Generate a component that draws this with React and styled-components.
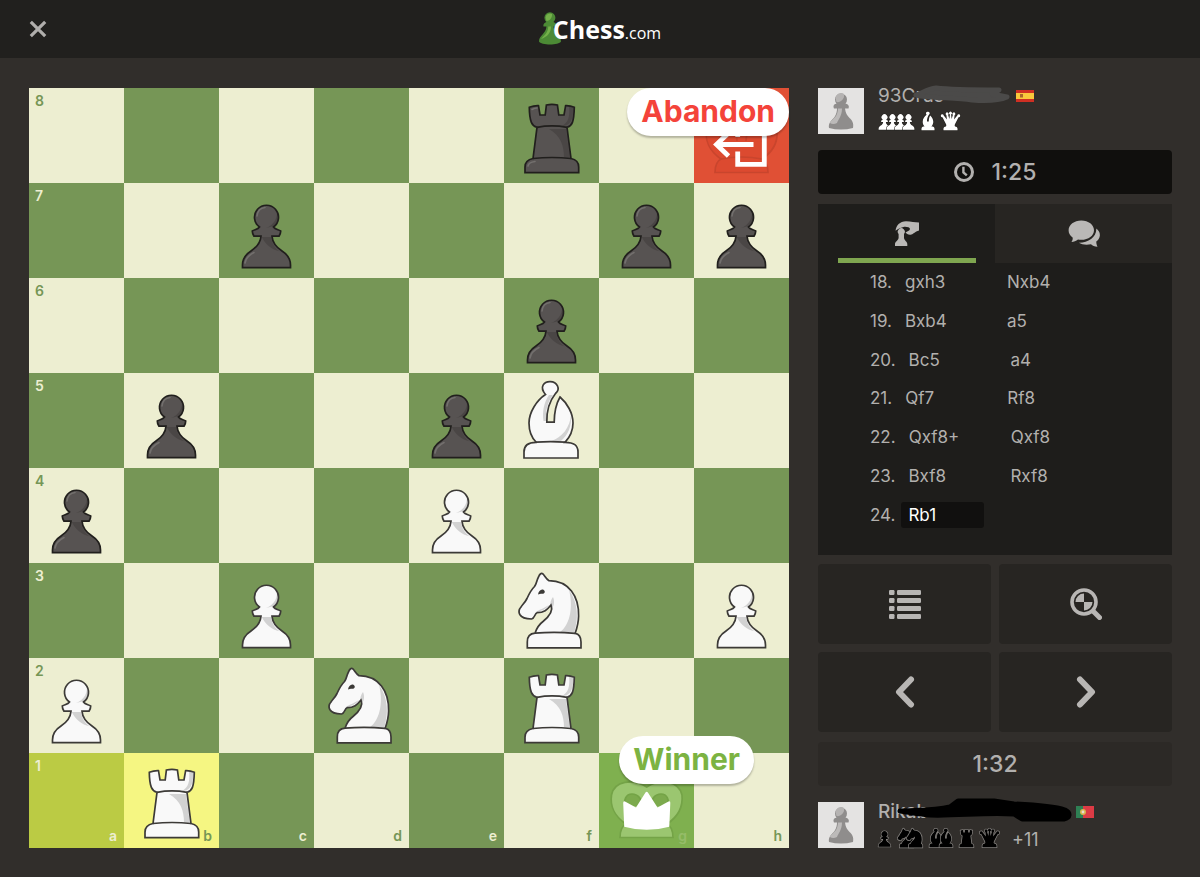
import React, { Component } from 'react';
import styled, { createGlobalStyle } from 'styled-components';

const GlobalStyle = createGlobalStyle`
  * {
    box-sizing : border-box;
  }

  body {
    margin : 0;
    background-color : #312e2b;
    font-family : Inter, "Liberation Sans", sans-serif;
    color : #b2b0ae;
  }

  button {
    font-family : inherit;
    border : 0;
    padding : 0;
    cursor : pointer;
  }

  svg {
    display : block;
  }
`;

const Header = styled.header`
  display : grid;
  grid-template-columns : 1fr auto 1fr;
  align-items : center;
  height : 58px;
  padding : 0 29px;
  background-color : #21201e;
`;

const CloseButton = styled.button`
  justify-self : start;
  background : none;
`;

const Logo = styled.a`
  display : flex;
  align-items : center;
  text-decoration : none;
  color : #ffffff;
  font-family : "Open Sans", "Noto Sans", sans-serif;
`;

const LogoName = styled.span`
  margin-left : -8px;
  padding-top : 4px;
  font-size : 25px;
  line-height : 32px;
  font-weight : bold;
`;

const LogoDomain = styled.span`
  font-size : 16px;
  font-weight : normal;
`;

const Game = styled.main`
  display : grid;
  grid-template-columns : minmax(0, 1fr) 354px;
  gap : 29px;
  padding : 30px 28px 29px 29px;
`;

const Board = styled.div`
  display : grid;
  grid-template-columns : repeat(8, 1fr);
  align-self : start;
`;

const Square = styled.div`
  position : relative;
  aspect-ratio : 1;
  color : ${props => props.$dark ? '#edeed1' : '#769656'};
  background-color : ${props => props.$color || (props.$dark ? '#769656' : '#edeed1')};
`;

const Rank = styled.span`
  position : absolute;
  top : 5px;
  left : 6px;
  font-size : 14px;
  line-height : 16px;
  font-weight : 600;
`;

const File = styled.span`
  position : absolute;
  right : 7px;
  bottom : 4px;
  font-size : 14px;
  line-height : 16px;
  font-weight : 600;
  opacity : ${props => props.$faded ? 0.2 : 1};
`;

const Badge = styled.strong`
  position : absolute;
  z-index : 1;
  top : ${props => props.$top};
  right : ${props => props.$right};
  height : 48px;
  padding : 0 14px;
  border-radius : 24px;
  background-color : #ffffff;
  box-shadow : 0 2px 2px rgba(0, 0, 0, 0.25);
  color : ${props => props.$color};
  font-size : 30px;
  line-height : 47px;
  font-weight : 700;
`;

const Sidebar = styled.aside`
  display : flex;
  flex-direction : column;
`;

const Player = styled.section`
  display : flex;
  gap : 14px;
  height : 46px;
`;

const PlayerInfo = styled.div`
  display : flex;
  flex-direction : column;
  justify-content : space-between;
  padding : ${props => props.$bottom ? '2px 0 0' : '0 0 3px'};
`;

const NameLine = styled.div`
  display : flex;
  align-items : center;
  height : 16px;
`;

const Name = styled.span`
  position : relative;
  width : ${props => props.$width};
  font-size : 19px;
  line-height : 16px;
  font-weight : ${props => props.$bold ? 500 : 400};
`;

const Scribble = styled.svg`
  position : absolute;
  left : ${props => props.$left};
  top : ${props => props.$top};
`;

const Captured = styled.div`
  display : flex;
  align-items : flex-end;
  gap : 6px;
  height : 20px;
`;

const Stack = styled.span`
  display : flex;

  svg + svg {
    margin-left : ${props => props.$overlap};
  }
`;

const Score = styled.span`
  margin-left : 7px;
  font-size : 18px;
  line-height : 16px;
`;

const Clock = styled.div`
  display : flex;
  align-items : center;
  justify-content : center;
  gap : 18px;
  height : 44px;
  margin : ${props => props.$active ? '16px 0 10px' : '10px 0 16px'};
  border-radius : 4px;
  background-color : ${props => props.$active ? '#100f0d' : '#2c2926'};
  font-size : 23px;
  font-weight : 500;
`;

const Panel = styled.section`
  display : flex;
  flex-direction : column;
  flex : 1;
  background-color : #1e1d1b;
`;

const Tabs = styled.div`
  display : flex;
`;

const Tab = styled.button`
  display : flex;
  align-items : center;
  justify-content : center;
  position : relative;
  flex : 1;
  height : 59px;
  color : #bab8b6;
  background-color : ${props => props.$active ? '#1e1d1b' : '#272522'};

  &::after {
    content : '';
    position : absolute;
    left : 20px;
    right : 19px;
    bottom : 0;
    height : ${props => props.$active ? '5px' : 0};
    background-color : #7fa650;
  }
`;

const Moves = styled.ol`
  display : grid;
  grid-auto-rows : 1fr;
  flex : 1;
  margin : 0;
  padding : 0 0 21px 52px;
  list-style : none;
`;

const MoveRow = styled.li`
  display : flex;
  align-items : center;
  font-size : 17px;
`;

const MoveNumber = styled.span`
  margin-right : 6px;
`;

const Move = styled.button`
  width : 83px;
  height : 26px;
  margin-right : 19px;
  padding-left : 7px;
  border-radius : 3px;
  text-align : left;
  font-size : 17px;
  color : ${props => props.$current ? '#ffffff' : '#b2b0ae'};
  background-color : ${props => props.$current ? '#11100f' : 'transparent'};
`;

const Controls = styled.div`
  display : grid;
  grid-template-columns : 1fr 1fr;
  gap : 8px;
  margin-top : 9px;
`;

const Control = styled.button`
  display : flex;
  align-items : center;
  justify-content : center;
  height : 80px;
  border-radius : 4px;
  color : #b8b6b4;
  background-color : #272522;
`;

const SHAPES = {
  pawn : {
    box : '21 20 53 67',
    body : 'M23.5 84.6V82C23.5 75 26.5 71.5 32 68C38 64 41.5 60 42 53.2H35C34 51.5 33.2 50 33.3 48C36 46.5 39 46.5 40.5 44A12 12 0 1 1 54.5 44C56 46.5 59 46.5 61.7 48C61.8 50 61 51.5 60 53.2H53C53.5 60 57 64 63 68C68.5 71.5 71.5 75 71.5 82V84.6Z',
    shade : ['M42.8 54H52.3C52.5 60 56 65 60.5 68.2C53 67 46 61 42.8 54Z', 'M55 43C60 38 60.5 31 57 26.5C60 34 55 42 47 45Z'],
    light : ['M38 33C38.5 28 42 25 46 24.5', 'M26 80C27 74 31 71.5 35 69.5'],
  },
  rook : {
    box : '19 14 58 73',
    body : 'M33 39.3C28 38 25.5 34 25.3 19.3Q30 17.5 34.5 17.7L36 27H41.2L42.4 17Q48 15.8 53.4 17L54.8 27H60L61.6 17.7Q66 17.5 70.3 19.3C70 34 68 38 63 39.3L67 70.5C72 71.5 74.7 74 74.7 79V84.6H21V79C21 74 24 71.5 29 70.5Z',
    shade : ['M45 41H62L65.8 69.5H60C60 58 57 48 45 41Z', 'M69.5 20C69 33 66 38 57 38.5C65 35 66 27 65 18.5Z'],
    light : ['M28 21.5Q31 20 33 20', 'M24 78C24.5 75 27 74 31 73.5'],
    lines : ['M33 39.3Q48 36.6 63 39.3', 'M29 70.5Q48 68.5 67 70.5'],
  },
  bishop : {
    box : '18 7 58 80',
    body : 'M32 69C27 64 25 57 25 50C25 39 33 27 41.5 21.5C35 14 40 8.5 46.3 8.7C53 8.8 57 16 51.5 20.5C45.5 28 42.5 38 42.8 49.2H50.2C50.3 39 52 31 56 24C63 30 69 40 69 50C69 57 66 64 61 69.4C70 69.4 74 72 74 79V85H20V79C20 72 24 69.4 32 69.4Z',
    shade : ['M67 42C68 53 64 62 57 68H47C58 65 66 54 67 42Z', 'M45 22C40 29 38 39 39.5 48H42V46C41.5 38 43.5 29 49 22Z'],
    light : [],
    lines : ['M32 69.2Q46.5 68 61 69.2'],
  },
  knight : {
    box : '13 8 66 79',
    body : 'M31 70.2C33 64 35 61.5 39 58.5C44.5 54 49.5 48 47 42C43 47 40 49.5 33 49.7C30.5 50.5 31 55.5 27.5 56C23 56 17.5 54.5 15.8 51.5C14.5 49 14.8 46.5 17 44C19 41 21 39.5 23 35.5C25 31 27 27 30.5 23.5C33 20 32.5 17.5 34.5 14C35.5 11.5 37 9.5 39 11C41 13 42 16 45 17.7C65 18 75 33 74.6 53C74.5 60 73 65 71.2 70.3C75 71 77 73.5 77 79V84.8H23.3V79C23.3 73.5 26 70.5 31 70.2Z',
    shade : ['M65 27C75 41 74 57 70.3 69.2H56C67 61 69 42 65 27Z', 'M49 34C46 38 46 41 47 47C50 43 51 39 49 34Z', 'M32 49C38 48 42 46 45 42C39 46 36 46 32 49Z'],
    light : [],
    lines : ['M31 70.2Q50 68.4 71.2 70.3'],
  },
  queen : {
    box : '9 8 77 79',
    body : 'M29 60L15 32A6 6 0 1 1 20 25L33 41L31 24A6 6 0 1 1 38 23L43 39L45 21A6 6 0 1 1 50 21L52 39L57 23A6 6 0 1 1 64 24L62 41L75 25A6 6 0 1 1 80 32L66 60C64 64 64 67 66 70C73 71 76 74 76 80V85H19V80C19 74 22 71 29 70C31 67 31 64 29 60Z',
    shade : [],
    light : [],
  },
};

const Piece = ({ name, dark }) => {
  const shape = SHAPES[name];
  const line = dark ? '#211f1d' : '#3c3a37';
  return (
    <svg viewBox="0 0 95 95" width="100%" height="100%" role="img" aria-label={name}>
      <path d={shape.body} fill={dark ? '#575352' : '#f9f9f9'} />
      {shape.shade.map(d => <path key={d} d={d} fill={dark ? '#4a4645' : '#d2d2d2'} />)}
      <path d={shape.body} fill="none" stroke={line} strokeWidth="1.7" />
      {shape.lines && shape.lines.map(d => <path key={d} d={d} fill="none" stroke={line} strokeWidth="1.7" />)}
      {dark && shape.light.map(d => <path key={d} d={d} fill="none" stroke="#73706e" strokeWidth="1.6" strokeLinecap="round" />)}
      {name === 'knight' && <path d="M34 31.5C34.5 28 37 25.5 39.5 26.7C42 28.5 40.5 31 38 30.8C36.5 30.8 35 31.2 34 31.5Z" fill={line} />}
    </svg>
  );
};

const MiniPiece = ({ name, dark, width, height = 18 }) => (
  <svg viewBox={SHAPES[name].box} width={width} height={height} overflow="visible" aria-hidden="true">
    <path
      d={SHAPES[name].body}
      fill={dark ? '#000000' : '#ffffff'}
      stroke={dark ? '#85827f' : '#262421'}
      strokeWidth={dark ? 6 : 5}
      paintOrder="stroke"
    />
  </svg>
);

const KingGhost = ({ fill, hole, line }) => (
  <g fill={fill} stroke={line} strokeWidth="1.7">
    <path d="M27 71C15 63 11 52 12.5 42C15 28 34 25 47.7 34C61 25 80 28 83 42C84 52 80 63 68 71C72 73 74 77 74 84.5H21C21 77 23 73 27 71Z" />
    <path d="M27 54C24 47 27 41 33 41C39 41 43 46 43 53M52 53C52 46 56 41 62 41C68 41 71 47 68 54" fill={hole} />
    <path d="M27 71Q47.5 67 68 71" fill="none" />
  </g>
);

const WinnerMark = () => (
  <svg viewBox="0 0 95 95" width="100%" height="100%" role="img" aria-label="winning king">
    <KingGhost fill="#9bc670" hole="#7caa4d" line="#74a347" />
    <path d="M26 48.5L37 54.5L46.5 39.5Q47.7 38 48.9 39.5L58.5 54.5L69.5 48.5Q71.5 47.7 71.3 50L70.3 73.7Q47.7 80 25.2 73.7L24.2 50Q24.2 47.7 26 48.5Z" fill="#ffffff" />
  </svg>
);

const AbandonMark = () => (
  <svg viewBox="0 0 95 95" width="100%" height="100%" role="img" aria-label="abandoned king">
    <KingGhost fill="#dc4a30" hole="#dc4a30" line="#c9452d" />
    <path d="M43.7 49V36H70.3V76.3H43.7V63.5M59.5 56.5H22M34.5 45L22.5 56.5L34.5 68" fill="none" stroke="#ffffff" strokeWidth="4.8" />
  </svg>
);

const AvatarPicture = () => (
  <svg width="46" height="46" viewBox="0 0 46 46" role="img" aria-label="avatar">
    <path d="M0 0H46V46H0Z" fill="#e4e3e2" />
    <path d="M11 40C10 35 14 32 16.5 29C18.5 26 19 23 19 20.5H16C15 18 15.5 16.5 18.5 15.5A6 6 0 1 1 27.5 15.5C30.5 16.5 31.5 18 30.5 20.5H27C27.5 25 29 27.5 31.5 30C34 32 36 35 35 40Q23 43 11 40Z" fill="#8f8d8c" />
    <path d="M12 35C12 33 16 31 18 28C19.5 25 20 23 20 20.5H24C24 28 20 32 19 35Q15 37 12 35Z" fill="#bcbab9" />
    <path d="M17.5 10A5.5 5.5 0 0 1 26 6C27 11 22 15 18.5 14Z" fill="#b5b3b2" />
  </svg>
);

const SpainFlag = () => (
  <svg width="18" height="12" viewBox="0 0 18 12" role="img" aria-label="Spain">
    <path d="M0 0H18V12H0Z" fill="#cf2f23" />
    <path d="M0 3H18V9H0Z" fill="#f9c83c" />
    <path d="M4 4H7V7.5H4Z" fill="#a9662c" />
  </svg>
);

const PortugalFlag = () => (
  <svg width="18" height="12" viewBox="0 0 18 12" role="img" aria-label="Portugal">
    <path d="M0 0H18V12H0Z" fill="#dc3b45" />
    <path d="M0 0H7V12H0Z" fill="#2f8054" />
    <circle cx="7" cy="6" r="3" fill="#d9b54c" />
    <circle cx="7" cy="6" r="1.4" fill="#e9dcd2" />
  </svg>
);

const LogoPawn = () => (
  <svg width="22" height="34" viewBox="0 0 22 34" aria-hidden="true">
    <path d="M0 29.5C0 23 7 22 7.5 14.5H4.5C4 12.5 5 11 7.3 10A5.5 5.5 0 1 1 14.5 10C17 11 18 12.5 17.5 14.5H14.5C15 22 22 23 22 29.5C20 33.5 2 33.5 0 29.5Z" fill="#4c8a35" />
    <path d="M2 27C5 23.5 9 21 9.3 14.5H12C12 21 8 25 2 27ZM6.5 5.5A4.5 4.5 0 0 1 13 2C13.5 6 10.5 9 7.5 9Z" fill="#74b04a" />
  </svg>
);

const CloseIcon = () => (
  <svg width="18" height="18" viewBox="0 0 18 18" fill="none" stroke="#b0aeac" strokeWidth="3.2" aria-hidden="true">
    <path d="M1.8 1.8L16.2 16.2M16.2 1.8L1.8 16.2" />
  </svg>
);

const ClockIcon = () => (
  <svg width="20" height="20" viewBox="0 0 20 20" fill="none" stroke="currentColor" strokeWidth="3" aria-hidden="true">
    <circle cx="10" cy="10" r="8.5" />
    <path d="M9.4 4.8V10.4L12.8 13.4" strokeWidth="2.4" />
  </svg>
);

const HandIcon = () => (
  <svg width="24" height="26" viewBox="0 0 24 26" fill="currentColor" aria-hidden="true">
    <path d="M.6 9.8C.8 4.5 5 .3 11 .2C16 .2 20 1.5 24 1.5V9.5C20 10.5 18 13.5 15.5 13.8C13 14 11.5 12.8 10.5 11.6C12 10.5 14.7 9.8 15 8C15 6.3 11 5.5 8.5 6C5 6.7 3 8 .6 9.8Z" />
    <path d="M3.6 13A3.5 3.5 0 1 1 9 13V17C9.5 20 12.3 20.5 12.3 23V25H0V23C0 20.5 3 20 3.6 17Z" />
  </svg>
);

const ChatIcon = () => (
  <svg width="32" height="28" viewBox="0 0 32 28" fill="currentColor" aria-hidden="true">
    <path d="M13.3.5C20.5.5 26 4.8 26 10.2S20.5 19.8 13.3 19.8C12 19.8 11 19.7 10 19.4C8 21 6 21.8 3.4 21.9C4.5 20.5 5 19 4.6 17.4C2 15.6.6 13.2.6 10.2C.6 4.8 6.2.5 13.3.5Z" />
    <path d="M28.3 8.5C31 10.5 32.2 13 31.8 16C31.4 18.5 30 20.2 28.3 21.5C28.3 23.5 28.7 25 29.5 26.8C26.5 26.5 24.5 25.5 23 24.2C19 25 14 24.8 10.8 22.8C20 23 28.7 17.5 28.3 8.5Z" />
  </svg>
);

const ListIcon = () => (
  <svg width="32" height="29" viewBox="0 0 32 29" fill="currentColor" aria-hidden="true">
    {[0, 8, 16, 24].map(y => (
      <g key={y}>
        <rect x="0" y={y} width="5.5" height="5" rx="1.2" />
        <rect x="8" y={y} width="24" height="5" rx="1.2" />
      </g>
    ))}
  </svg>
);

const AnalysisIcon = () => (
  <svg width="32" height="32" viewBox="0 0 32 32" fill="currentColor" aria-hidden="true">
    <circle cx="14" cy="14" r="12" fill="none" stroke="currentColor" strokeWidth="3.6" />
    <path d="M14 14H5.5A8.5 8.5 0 0 1 14 5.5ZM14 14H22.5A8.5 8.5 0 0 1 14 22.5Z" />
    <path d="M23.5 23.5L29.5 29.5" stroke="currentColor" strokeWidth="5" strokeLinecap="round" />
  </svg>
);

const ChevronIcon = ({ d }) => (
  <svg width="20" height="32" viewBox="0 0 20 32" fill="none" stroke="currentColor" strokeWidth="6" strokeLinecap="round" strokeLinejoin="round" aria-hidden="true">
    <path d={d} />
  </svg>
);

const FILES = ['a', 'b', 'c', 'd', 'e', 'f', 'g', 'h'];
const RANKS = [8, 7, 6, 5, 4, 3, 2, 1];

const PIECES = {
  f8 : ['rook', true],
  c7 : ['pawn', true],
  g7 : ['pawn', true],
  h7 : ['pawn', true],
  f6 : ['pawn', true],
  b5 : ['pawn', true],
  e5 : ['pawn', true],
  f5 : ['bishop', false],
  a4 : ['pawn', true],
  e4 : ['pawn', false],
  c3 : ['pawn', false],
  f3 : ['knight', false],
  h3 : ['pawn', false],
  a2 : ['pawn', false],
  d2 : ['knight', false],
  f2 : ['rook', false],
  b1 : ['rook', false],
};

const HIGHLIGHTS = {
  a1 : '#bbcb44',
  b1 : '#f5f682',
  g1 : '#7fb04f',
  h8 : '#e05035',
};

const MOVES = [
  [18, 'gxh3', 'Nxb4'],
  [19, 'Bxb4', 'a5'],
  [20, 'Bc5', 'a4'],
  [21, 'Qf7', 'Rf8'],
  [22, 'Qxf8+', 'Qxf8'],
  [23, 'Bxf8', 'Rxf8'],
  [24, 'Rb1'],
];

class App extends Component {

  constructor(props) {
    super(props);

    this.state = {
      tab : 'moves',
      current : 'Rb1',
    };
  }

  handleTabClick = (tab) => {
    this.setState({ tab });
  }

  handleMoveClick = (current) => {
    this.setState({ current });
  }

  renderSquare = (file, rank) => {
    const id = file + rank;
    const piece = PIECES[id];
    const dark = (FILES.indexOf(file) + rank) % 2 === 1;

    return (
      <Square key={id} $dark={dark} $color={HIGHLIGHTS[id]}>
        {file === 'a' && <Rank>{rank}</Rank>}
        {rank === 1 && <File $faded={file === 'g'}>{file}</File>}
        {piece && <Piece name={piece[0]} dark={piece[1]} />}
        {id === 'h8' && <AbandonMark />}
        {id === 'h8' && <Badge $color='#f4433a' $top='0' $right='0'>Abandon</Badge>}
        {id === 'g1' && <WinnerMark />}
        {id === 'g1' && <Badge $color='#7cb342' $top='-17px' $right='-60px'>Winner</Badge>}
      </Square>
    );
  }

  render() {
    const { tab, current } = this.state;

    return (
      <>
        <GlobalStyle />
        <Header>
          <CloseButton aria-label="Close"><CloseIcon /></CloseButton>
          <Logo href="#">
            <LogoPawn />
            <LogoName>Chess<LogoDomain>.com</LogoDomain></LogoName>
          </Logo>
        </Header>
        <Game>
          <Board>
            {RANKS.map(rank => FILES.map(file => this.renderSquare(file, rank)))}
          </Board>
          <Sidebar>
            <Player>
              <AvatarPicture />
              <PlayerInfo>
                <NameLine>
                  <Name $width='138px'>
                    93Crus
                    <Scribble $left='34px' $top='-4px' width="100" height="22" viewBox="0 0 100 22" aria-hidden="true">
                      <path d="M4 11C10 10 14 5 24 4C40 6 60 6 87 6L80 10L95 13C86 17 72 17 60 16C46 14 30 14 20 13C14 13 10 13 4 11Z" fill="#4b4a49" stroke="#4b4a49" strokeWidth="5" strokeLinecap="round" strokeLinejoin="round" />
                    </Scribble>
                  </Name>
                  <SpainFlag />
                </NameLine>
                <Captured>
                  <Stack $overlap='-5px'>
                    <MiniPiece name="pawn" width={13} />
                    <MiniPiece name="pawn" width={13} />
                    <MiniPiece name="pawn" width={13} />
                    <MiniPiece name="pawn" width={13} />
                  </Stack>
                  <MiniPiece name="bishop" width={14} height={20} />
                  <MiniPiece name="queen" width={19} height={20} />
                </Captured>
              </PlayerInfo>
            </Player>
            <Clock $active><ClockIcon />1:25</Clock>
            <Panel>
              <Tabs role="tablist">
                <Tab role="tab" aria-label="Moves" aria-selected={tab === 'moves'} $active={tab === 'moves'} onClick={() => this.handleTabClick('moves')}>
                  <HandIcon />
                </Tab>
                <Tab role="tab" aria-label="Chat" aria-selected={tab === 'chat'} $active={tab === 'chat'} onClick={() => this.handleTabClick('chat')}>
                  <ChatIcon />
                </Tab>
              </Tabs>
              <Moves>
                {MOVES.map(([number, white, black]) => (
                  <MoveRow key={number}>
                    <MoveNumber>{number}.</MoveNumber>
                    <Move $current={current === white} onClick={() => this.handleMoveClick(white)}>{white}</Move>
                    {black && <Move $current={current === black} onClick={() => this.handleMoveClick(black)}>{black}</Move>}
                  </MoveRow>
                ))}
              </Moves>
            </Panel>
            <Controls>
              <Control aria-label="Options"><ListIcon /></Control>
              <Control aria-label="Analysis"><AnalysisIcon /></Control>
              <Control aria-label="Previous move"><ChevronIcon d="M16 3.5L4 16L16 28.5" /></Control>
              <Control aria-label="Next move"><ChevronIcon d="M4 3.5L16 16L4 28.5" /></Control>
            </Controls>
            <Clock>1:32</Clock>
            <Player>
              <AvatarPicture />
              <PlayerInfo $bottom>
                <NameLine>
                  <Name $width='198px' $bold>
                    Rikab
                    <Scribble $left='18px' $top='-8px' width="180" height="30" viewBox="0 0 180 30" aria-hidden="true">
                      <path d="M4 15C20 14 38 15 54 11L62 5H98L118 8C140 9 160 11 169 14C175 17 174 22 168 23H126L118 18C90 16 60 20 34 19C24 18 12 16 4 15Z" fill="#000000" stroke="#000000" strokeWidth="5" strokeLinecap="round" strokeLinejoin="round" />
                    </Scribble>
                  </Name>
                  <PortugalFlag />
                </NameLine>
                <Captured>
                  <MiniPiece name="pawn" dark width={13} />
                  <Stack $overlap='-8px'>
                    <MiniPiece name="knight" dark width={17} height={20} />
                    <MiniPiece name="knight" dark width={17} height={20} />
                  </Stack>
                  <Stack $overlap='-4px'>
                    <MiniPiece name="bishop" dark width={14} height={20} />
                    <MiniPiece name="bishop" dark width={14} height={20} />
                  </Stack>
                  <MiniPiece name="rook" dark width={15} height={19} />
                  <MiniPiece name="queen" dark width={19} height={20} />
                  <Score>+11</Score>
                </Captured>
              </PlayerInfo>
            </Player>
          </Sidebar>
        </Game>
      </>
    );
  }
}

export default App;
